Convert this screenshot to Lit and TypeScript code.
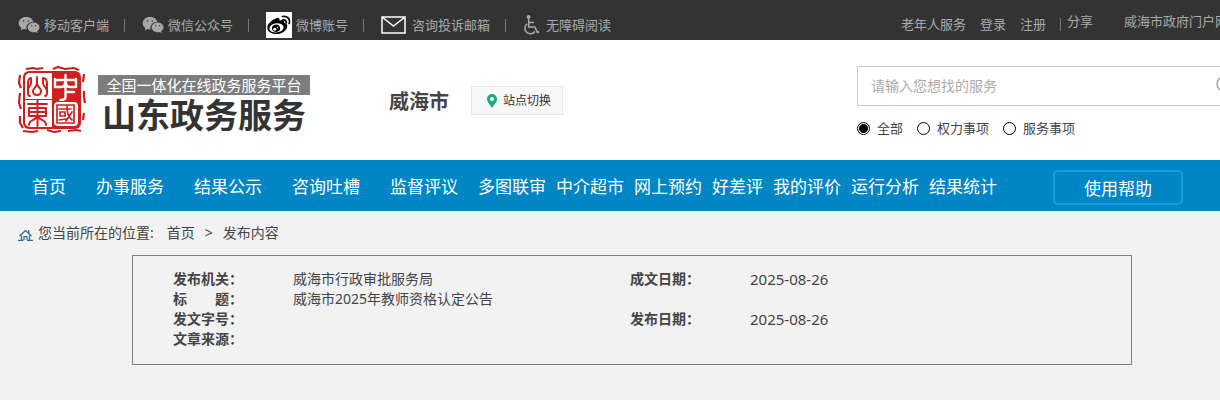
import { LitElement, html, css, svg } from "lit";
import { customElement, state } from "lit/decorators.js";

const wechatIcon = html`<svg class="icon" width="22" height="18" viewBox="0 0 22 18" aria-hidden="true">
  <path fill="#a8a8a8" d="M8 1C3.800 1 .7 3.700.7 7.200c0 2 1 3.600 2.700 4.800L2.700 14.500l2.800-1.400c.8.200 1.600.3 2.500.3h.6c-1-3.900 2-7.700 6.700-7.700C14.600 2.900 11.700 1 8 1z"/>
  <path fill="#a8a8a8" d="M21.500 11.300c0-2.800-2.700-4.900-5.900-4.900s-5.900 2.200-5.900 4.900 2.600 5 5.900 5c.7 0 1.400-.1 2.100-.3l2 1.100-.5-1.900c1.400-1 2.300-2.300 2.300-3.900z"/>
  <g fill="#333"><circle cx="5.500" cy="5" r=".8"/><circle cx="10.300" cy="5" r=".8"/><circle cx="13.700" cy="9.700" r=".6"/><circle cx="17.600" cy="9.700" r=".6"/></g>
</svg>`;

const weiboIcon = html`<svg class="icon" width="26" height="26" viewBox="0 0 26 26" aria-hidden="true">
  <rect width="26" height="26" fill="#fff"/>
  <path d="M10.300 6.200c2-.8 3.600-.2 3.200 2.300 2.800-1.100 5.400-.8 4.700 2.200 2 .6 3.200 1.700 3.100 3.500-.2 4.200-5.200 7.800-11 7.800-5 0-9-2.500-9-6.300 0-3.500 4.600-8.100 9-9.500z"/>
  <ellipse cx="10.500" cy="15.800" rx="7.200" ry="4.600" fill="#fff" transform="rotate(-7 10.500 15.800)"/>
  <ellipse cx="10" cy="16.300" rx="4.100" ry="3.700" transform="rotate(-15 10 16.300)"/>
  <circle cx="8.800" cy="17.300" r="1.500" fill="#fff"/><circle cx="11.500" cy="15.800" r=".7" fill="#fff"/>
  <path d="M16.500 4.500c4.500-1 8 2.500 6.700 7M17 7.900c2.300-.5 3.700 1 3.100 3.100" fill="none" stroke="#000" stroke-width="1.700" stroke-linecap="round"/>
</svg>`;

const mailIcon = html`<svg class="icon" width="25" height="18" viewBox="0 0 25 18" aria-hidden="true">
  <path d="M1 1h23v16H1zM1 1l11.500 9L24 1" fill="none" stroke="#fff" stroke-width="1.500"/>
</svg>`;

const accessIcon = html`<svg class="icon" width="17" height="21" viewBox="0 0 17 21" aria-hidden="true">
  <circle cx="5.600" cy="2" r="1.900" fill="#aaa"/>
  <path d="M5.700 4v8h6.200l2.500 5.500 1.800-.8M6 7.500h5M4 8.800a5.600 5.600 0 1 0 8 7.700" fill="none" stroke="#aaa" stroke-width="1.500"/>
</svg>`;

const pinIcon = html`<svg width="10" height="14" viewBox="0 0 10 14" aria-hidden="true">
  <path fill="#1aad7c" fill-rule="evenodd" d="M5 0a5 5 0 0 0-5 5c0 3 3 5.500 5 9 2-3.500 5-6 5-9a5 5 0 0 0-5-5zm0 3a2 2 0 1 1 0 4 2 2 0 0 1 0-4z"/>
</svg>`;

const houseIcon = html`<svg width="15" height="12" viewBox="0 0 15 12" aria-hidden="true">
  <path d="M1.500 7l6-5.500 6 5.500M3.500 6.500v4.500M11.500 6.500v4.500M6 11V7.500h3V11M0 11.400h5.500M9 11.400h6M10.800 1v3" fill="none" stroke="#2d6496" stroke-width="1.200"/>
</svg>`;

const searchIcon = html`<svg class="search-icon" width="20" height="20" viewBox="0 0 20 20" aria-hidden="true">
  <circle cx="8" cy="8" r="7" fill="none" stroke="#999" stroke-width="1.300"/><path d="M13 13l6 6" stroke="#999" stroke-width="1.500"/>
</svg>`;

const sealCharacters = svg`
  <g fill="none" stroke="#cf2020" stroke-width="2" stroke-linecap="round" stroke-linejoin="round">
    <path d="M19 11v6c0 4-4 5-4 8s2 4 4 4 4-1 4-4-4-4-4-8M13 12c-3 0-3 3-3 6v9c0 2 1 3 2 3M25 12c3 0 4 3 4 6v9c0 2-1 3-2 3M13 12v5c0 3-3 4-3 6M25 12v5c0 3 3 4 3 6"/>
    <path d="M10 38h19M19.500 34v26M11 42h17v8H11zM11 46h17M19 50c-1 5-8 3-8 9M20 50c1 5 8 3 8 9"/>
  </g>
  <g fill="none" stroke="#fff" stroke-width="2.400" stroke-linecap="round" stroke-linejoin="round">
    <path d="M47.500 9v22c0 3-3 3-5 3M37 13v8h6c2 0 4-1 4-4M58 13v8h-6c-3 0-4-1-4-4M37 14h21M48 26h8"/>
  </g>
  <rect x="36" y="36" width="24" height="24" rx="4" fill="#fff"/>
  <g fill="none" stroke="#cf2020" stroke-width="1.700" stroke-linecap="round">
    <path d="M39 39h17v18H39zM41 43h12M42 46h5v4h-5zM41 54l7-1M49 40c0 7 2 12 5 14M54 46l-6 9"/>
  </g>`;

const seal = html`<svg class="seal" width="68" height="68" viewBox="0 0 68 68" role="img" aria-label="中国山东">
  <path d="M8 3l7-1 4 1 6-1M35 3l5-2 7 2 9-1 5 2M2 9l-1 8 2 5M2 27l-1 10 2 6M2 50v7l3 5M66 8l-1 8M66 25v6l1 6M66 47l-1 7M5 65l9 1 6-1M29 64l7 2 7-1M50 65l8-1 5 1" fill="none" stroke="#c32020" stroke-width="2.200"/>
  <rect x="5" y="5" width="58" height="58" rx="6" fill="#cf2020"/>
  <path d="M12 7h22v26H7V12a5 5 0 0 1 5-5zM7 34h27v27H12a5 5 0 0 1-5-5z" fill="#fff"/>
  ${sealCharacters}
</svg>`;

@customElement("app-root")
export class AppRoot extends LitElement {
  @state() private scope = "全部";

  private mainNav = ["首页", "办事服务", "结果公示", "咨询吐槽", "监督评议"];
  private moreNav = ["多图联审", "中介超市", "网上预约", "好差评", "我的评价", "运行分析", "结果统计"];
  private scopes = ["全部", "权力事项", "服务事项"];

  static styles = css`
    :host {
      display: block;
      min-height: 100vh;
      overflow: hidden;
      background: #f2f2f2;
      color: #444;
      font: 14px/20px "Noto Sans", "Noto Sans CJK SC", sans-serif;
    }
    * { box-sizing: border-box; }
    a { color: inherit; text-decoration: none; white-space: nowrap; }
    svg { display: block; flex: none; }
    .page { min-width: 1264px; }

    .topbar {
      display: flex;
      justify-content: space-between;
      height: 40px;
      padding: 0 23px 0 18px;
      background: #333;
      color: #aaa;
      font-size: 13px;
    }
    .channels, .account { display: flex; align-items: center; }
    .channels { padding-top: 10px; }
    .channels a { display: flex; align-items: center; gap: 4px; }
    .channels .wide { gap: 6px; }
    .bar { width: 1px; height: 13px; background: #777; }
    .channels .bar { margin: 0 17px 0 15px; }
    .account { gap: 14px; padding-top: 8px; }
    .share { display: flex; align-items: center; gap: 6px; }
    .raised { display: flex; gap: 31px; padding-bottom: 6px; }

    .header {
      display: flex;
      align-items: flex-start;
      height: 120px;
      padding: 26px 18px 0;
      background: #fff;
    }
    .brand { display: flex; gap: 12px; }
    .names { width: 212px; padding-top: 9px; }
    .platform {
      background: #7d7d7d;
      color: #fff;
      font-size: 15px;
      line-height: 20px;
      text-align: center;
    }
    .name {
      margin: 0;
      color: #333;
      font-size: 34px;
      line-height: 40px;
      font-weight: 700;
      text-align: center;
      white-space: nowrap;
    }
    .city { margin: 22px 22px 0 79px; font-size: 20px; line-height: 28px; font-weight: 700; }
    .switch {
      display: flex;
      align-items: center;
      gap: 6px;
      height: 29px;
      margin-top: 20px;
      padding: 0 11px 0 15px;
      border: 1px solid #e8e8e8;
      background: #f8f8f8;
      color: #333;
      font: inherit;
      font-size: 12px;
    }
    .search { width: 389px; margin-left: auto; }
    .field {
      display: flex;
      align-items: center;
      height: 40px;
      padding: 0 9px 0 13px;
      border: 1px solid #c8c8c8;
    }
    .field input {
      flex: 1;
      min-width: 0;
      border: 0;
      outline: 0;
      padding: 0;
      background: none;
      color: #444;
      font: inherit;
    }
    .field input::placeholder { color: #aaa; opacity: 1; }
    .scopes { display: flex; gap: 14px; margin-top: 12px; font-size: 13px; }
    .scopes label { display: flex; align-items: center; gap: 7px; }
    .scopes input {
      appearance: none;
      width: 13px;
      height: 13px;
      margin: 0;
      border: 1px solid #000;
      border-radius: 50%;
      background: #fff;
    }
    .scopes input:checked { background: radial-gradient(circle, #000 4px, #fff 5px); }

    .nav {
      display: flex;
      align-items: center;
      height: 51px;
      padding: 3px 81px 0 17px;
      background: #0085c5;
      color: #fff;
      font-size: 17px;
    }
    .nav .main { padding: 0 15px; }
    .nav .more { padding: 0 5px; }
    .nav .help {
      width: 130px;
      height: 35px;
      margin-left: auto;
      border: 2px solid #1a9ae0;
      border-radius: 5px;
      line-height: 34px;
      text-align: center;
    }

    .crumbs { display: flex; align-items: center; padding: 12px 18px; }
    .crumbs svg { margin: 4px 5px 0 0; }
    .crumbs .first { margin-left: 13px; }
    .crumbs .sep { margin: 0 10px; }

    .info {
      width: 1000px;
      max-width: 100%;
      margin: 0 auto;
      padding: 13px 40px 15px;
      border: 1px solid #808080;
    }
    .info table { width: 100%; table-layout: fixed; border-collapse: collapse; }
    .info th, .info td { height: 20px; padding: 0; text-align: left; vertical-align: top; white-space: pre; }
    .info .label { width: 120px; }
    .info .value { width: 337px; }
    .info .date { font-size: 15px; }
  `;

  render() {
    return html`<div class="page">
      <div class="topbar">
        <div class="channels">
          <a href="#">${wechatIcon}移动客户端</a><span class="bar"></span>
          <a href="#">${wechatIcon}微信公众号</a><span class="bar"></span>
          <a href="#">${weiboIcon}微博账号</a><span class="bar"></span>
          <a href="#" class="wide">${mailIcon}咨询投诉邮箱</a><span class="bar"></span>
          <a href="#" class="wide">${accessIcon}无障碍阅读</a>
        </div>
        <div class="account">
          <a href="#">老年人服务</a><a href="#">登录</a><a href="#">注册</a>
          <div class="share"><span class="bar"></span>
            <div class="raised"><a href="#">分享</a><a href="#">威海市政府门户网站</a></div>
          </div>
        </div>
      </div>

      <header class="header">
        <div class="brand">
          ${seal}
          <div class="names">
            <div class="platform">全国一体化在线政务服务平台</div>
            <h1 class="name">山东政务服务</h1>
          </div>
        </div>
        <div class="city">威海市</div>
        <button class="switch" type="button">${pinIcon}站点切换</button>
        <form class="search" @submit=${(e: Event) => e.preventDefault()}>
          <div class="field">
            <input type="text" placeholder="请输入您想找的服务" aria-label="请输入您想找的服务" />
            ${searchIcon}
          </div>
          <div class="scopes">
            ${this.scopes.map(
              (s) => html`<label><input type="radio" name="scope" .checked=${this.scope === s}
                @change=${() => (this.scope = s)} />${s}</label>`
            )}
          </div>
        </form>
      </header>

      <nav class="nav">
        ${this.mainNav.map((t) => html`<a class="main" href="#">${t}</a>`)}
        ${this.moreNav.map((t) => html`<a class="more" href="#">${t}</a>`)}
        <a class="help" href="#">使用帮助</a>
      </nav>

      <div class="crumbs">
        ${houseIcon}<span>您当前所在的位置:</span>
        <a class="first" href="#">首页</a><span class="sep">&gt;</span><a href="#">发布内容</a>
      </div>

      <div class="info">
        <table>
          <colgroup><col class="label" /><col class="value" /><col class="label" /><col /></colgroup>
          <tbody>
            <tr><th>发布机关：</th><td>威海市行政审批服务局</td><th>成文日期：</th><td class="date">2025-08-26</td></tr>
            <tr><th>标　　题：</th><td colspan="3">威海市2025年教师资格认定公告</td></tr>
            <tr><th>发文字号：</th><td></td><th>发布日期：</th><td class="date">2025-08-26</td></tr>
            <tr><th>文章来源：</th><td colspan="3"></td></tr>
          </tbody>
        </table>
      </div>
    </div>`;
  }
}
